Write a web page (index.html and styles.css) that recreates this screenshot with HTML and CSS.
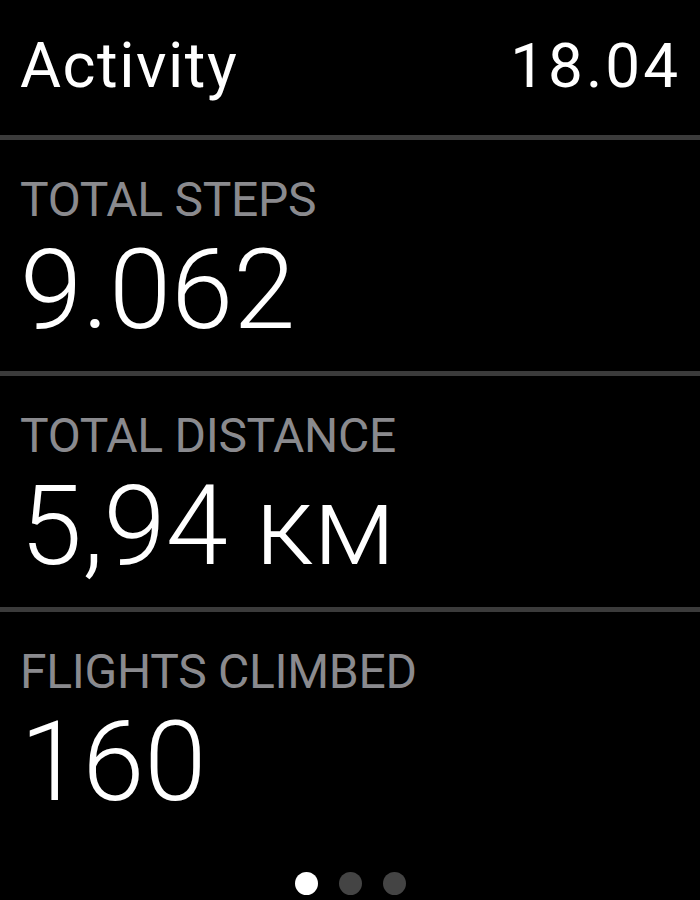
FILE: index.html
```html
<!DOCTYPE html>
<html lang="en">
<head>
<meta charset="utf-8">
<title>Activity</title>
<link rel="stylesheet" href="styles.css">
</head>
<body>
<div class="screen">
  <header class="header">
    <span class="title">Activity</span>
    <span class="time">18.04</span>
  </header>
  <section class="row">
    <div class="label">TOTAL STEPS</div>
    <div class="value">9.062</div>
  </section>
  <section class="row">
    <div class="label">TOTAL DISTANCE</div>
    <div class="value">5,94 км</div>
  </section>
  <section class="row last">
    <div class="label">FLIGHTS CLIMBED</div>
    <div class="value">160</div>
  </section>
  <nav class="dots">
    <span class="dot active"></span>
    <span class="dot"></span>
    <span class="dot"></span>
  </nav>
</div>
</body>
</html>
```
FILE: styles.css
```css
html, body {
  margin: 0;
  padding: 0;
  background: #000;
}
body {
  font-family: Roboto, "Noto Sans", "Liberation Sans", sans-serif;
  color: #fff;
  width: 700px;
  height: 900px;
  overflow: hidden;
}
.screen {
  display: flex;
  flex-direction: column;
}
.header {
  display: flex;
  justify-content: space-between;
  align-items: baseline;
  padding: 35px 22px 38px 20px;
}
.title {
  font-size: 63px;
  line-height: 62px;
  font-weight: 400;
  letter-spacing: 1.5px;
}
.time {
  font-size: 62px;
  line-height: 62px;
  font-weight: 400;
  letter-spacing: 3px;
  margin-right: -3px;
}
.row {
  border-top: 5px solid #3b3b3b;
  padding: 36px 20px 25px 20px;
  display: flex;
  flex-direction: column;
  gap: 10px;
}
.label {
  font-size: 48px;
  line-height: 48px;
  font-weight: 400;
  letter-spacing: -0.3px;
  color: #8a8a8e;
  white-space: nowrap;
}
.value {
  font-size: 112px;
  line-height: 112px;
  font-weight: 300;
  white-space: nowrap;
}
.row.last {
  padding-bottom: 0;
}
.dots {
  display: flex;
  justify-content: center;
  gap: 21px;
  padding-top: 54px;
}
.dot {
  width: 23px;
  height: 23px;
  border-radius: 50%;
  background: #444;
}
.dot.active {
  background: #fff;
}
```
